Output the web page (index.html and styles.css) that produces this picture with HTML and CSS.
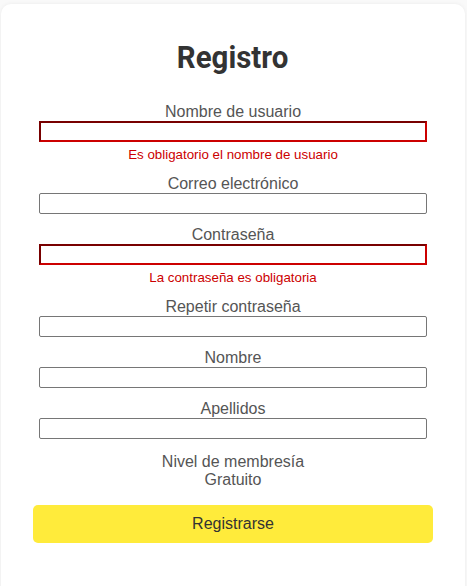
FILE: index.html
```html
<!DOCTYPE html>
<html lang="es">
<head>
<meta charset="utf-8">
<title>Registro</title>
<link rel="stylesheet" href="styles.css">
</head>
<body>
<main class="card">
  <h1 class="title"><span class="title-text">Registro</span></h1>
  <form class="form">
    <div class="field">
      <label class="label">Nombre de usuario</label>
      <input class="input input-error" type="text">
      <p class="error">Es obligatorio el nombre de usuario</p>
    </div>
    <div class="field">
      <label class="label">Correo electrónico</label>
      <input class="input" type="email">
    </div>
    <div class="field">
      <label class="label">Contraseña</label>
      <input class="input input-error" type="password">
      <p class="error">La contraseña es obligatoria</p>
    </div>
    <div class="field">
      <label class="label">Repetir contraseña</label>
      <input class="input" type="password">
    </div>
    <div class="field">
      <label class="label">Nombre</label>
      <input class="input" type="text">
    </div>
    <div class="field">
      <label class="label">Apellidos</label>
      <input class="input" type="text">
    </div>
    <div class="membership">
      <div>Nivel de membresía</div>
      <div>Gratuito</div>
    </div>
    <button class="submit" type="button">Registrarse</button>
  </form>
</main>
</body>
</html>
```
FILE: styles.css
```css
html, body {
  margin: 0;
  padding: 0;
  background: #f9f9f9;
}
body {
  padding: 4px 2px 0 1px;
  font-family: "Liberation Sans", Arial, sans-serif;
}
.card {
  background: #fff;
  border-radius: 10px;
  box-shadow: 0 0 4px rgba(0,0,0,0.06);
  height: 600px;
  box-sizing: border-box;
  padding: 32px 38px 0 38px;
}
.title {
  margin: 0 0 25px 0;
  text-align: center;
  font-family: Roboto, sans-serif;
  font-weight: 700;
  font-size: 32px;
  line-height: 42px;
  color: #333;
}
.title-text {
  display: inline-block;
  transform: scaleX(0.92);
}
.form {
  display: flex;
  flex-direction: column;
}
.field {
  display: flex;
  flex-direction: column;
  margin-bottom: 12px;
}
.label {
  display: block;
  text-align: center;
  font-size: 16px;
  line-height: 18px;
  color: #555;
  margin-bottom: 0;
}
.input {
  display: block;
  box-sizing: border-box;
  width: 100%;
  height: 21px;
  margin: 0;
  border: 1px solid #767676;
  border-radius: 2px;
  background: #fff;
  padding: 1px 2px;
}
.input-error {
  border: 2px inset #c00;
  border-radius: 0;
}
.error {
  margin: 5px 0 1px 0;
  text-align: center;
  font-size: 13.333px;
  line-height: 15px;
  color: #c00;
}
.membership {
  text-align: center;
  font-size: 16px;
  line-height: 18px;
  color: #555;
  margin-top: 2px;
}
.submit {
  margin: 16px -6px 0 -6px;
  height: 38px;
  border: none;
  border-radius: 5px;
  background: #ffeb3b;
  font-family: "Liberation Sans", Arial, sans-serif;
  font-size: 16px;
  color: #333;
}
```
